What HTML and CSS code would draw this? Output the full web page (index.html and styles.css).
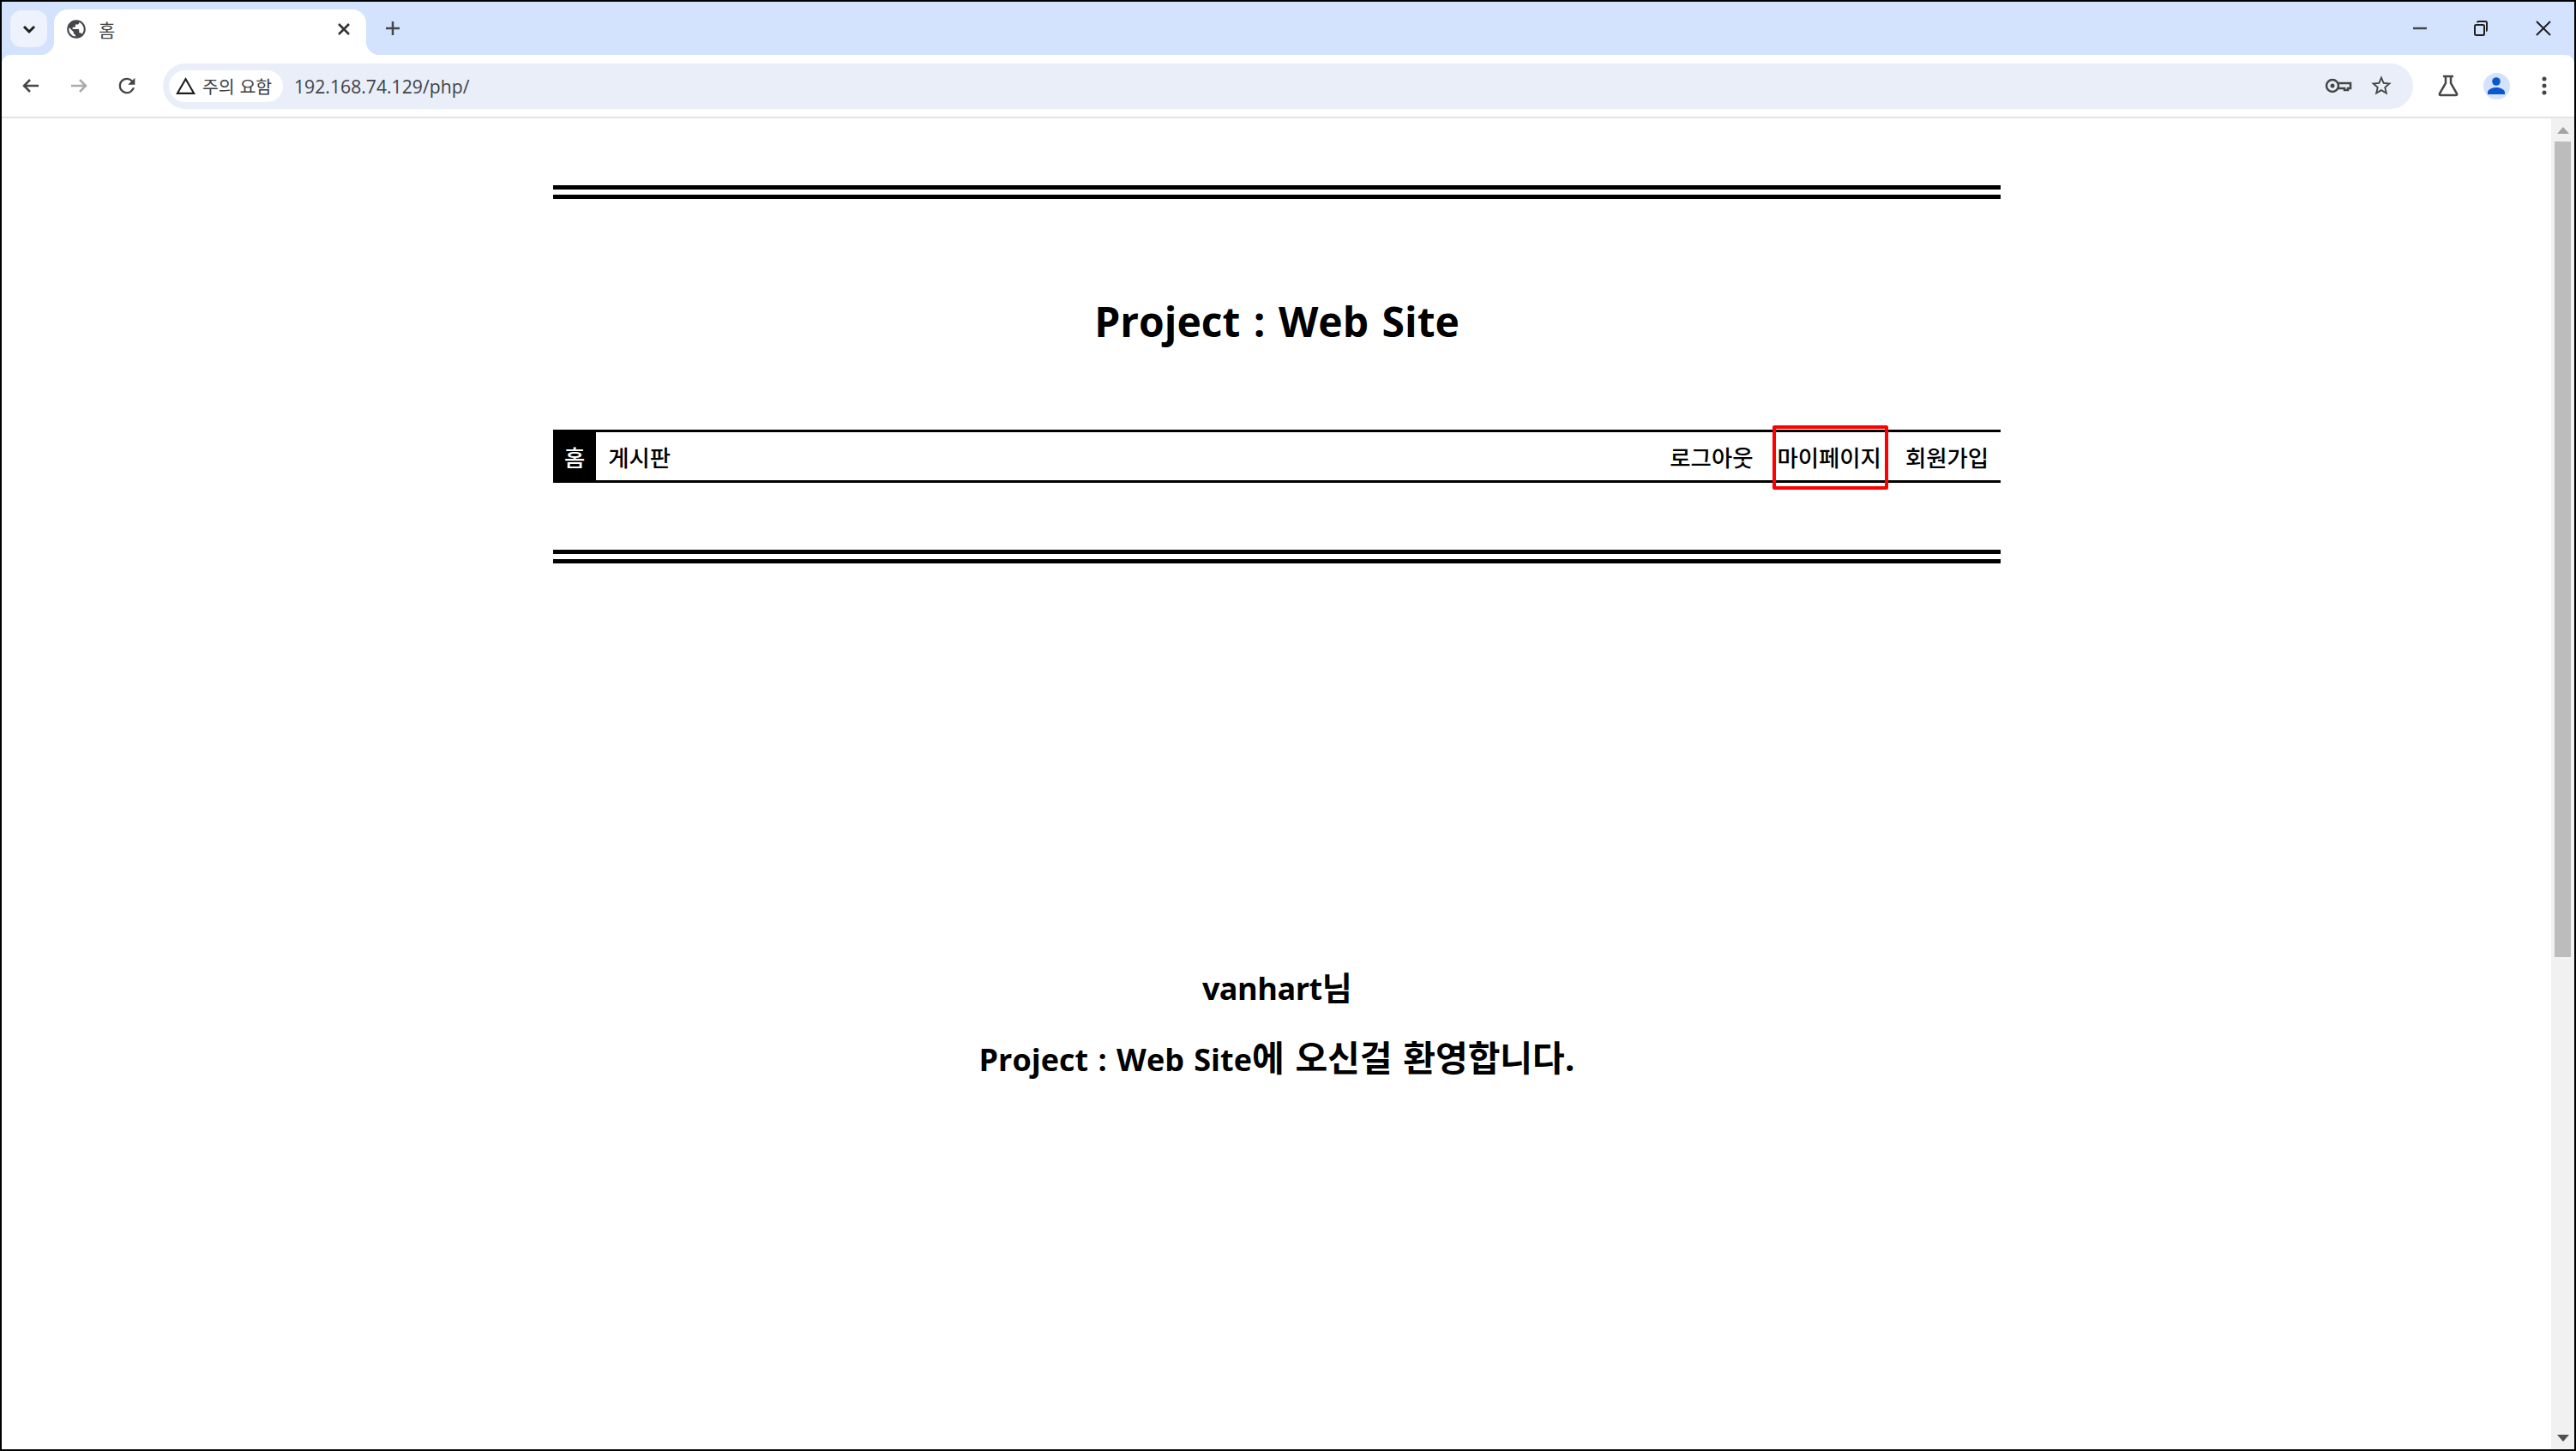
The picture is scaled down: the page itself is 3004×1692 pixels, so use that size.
FILE: index.html
```html
<!DOCTYPE html>
<html lang="ko">
	<head>
		<meta charset="utf-8">
		<title>홈</title>
		<link rel="stylesheet" href="styles.css">
	</head>
	<body>
		<header class="browser">
			<div class="tabstrip">
				<button class="tab-search">
					<svg width="20" height="20" viewBox="0 0 20 20"><path class="stroke-dark" d="M4 7l6 6 6-6"/></svg>
				</button>
				<div class="tab">
					<svg class="tab-globe" width="26" height="26" viewBox="0 0 24 24"><path d="M12 2C6.48 2 2 6.48 2 12s4.48 10 10 10 10-4.48 10-10S17.52 2 12 2zm-1 17.93c-3.95-.49-7-3.85-7-7.93 0-.62.08-1.21.21-1.79L9 15v1c0 1.1.9 2 2 2v1.93zm6.9-2.54c-.26-.81-1-1.39-1.9-1.39h-1v-3c0-.55-.45-1-1-1H8v-2h2c.55 0 1-.45 1-1V7h2c1.1 0 2-.9 2-2v-.41c2.93 1.19 5 4.06 5 7.41 0 2.08-.8 3.97-2.1 5.39z"/></svg>
					<span class="tab-title">홈</span>
					<svg class="tab-close" width="20" height="20" viewBox="0 0 20 20"><path class="stroke-close" d="M4 4l12 12M16 4L4 16"/></svg>
				</div>
				<button class="tab-new">
					<svg width="22" height="22" viewBox="0 0 22 22"><path class="stroke-mid" d="M11 3v16M3 11h16"/></svg>
				</button>
				<div class="spacer"></div>
				<button class="win-btn">
					<svg width="20" height="20" viewBox="0 0 20 20"><path class="stroke-mid" d="M2 10h16"/></svg>
				</button>
				<button class="win-btn">
					<svg width="20" height="20" viewBox="0 0 20 20"><path class="stroke-thin" d="M5 3.500c0-1 .6-1.500 1.500-1.500h8c1 0 1.500.6 1.500 1.500v8c0 1-.5 1.500-1 1.500M3.500 6h8c.8 0 1.500.7 1.500 1.500v9c0 .8-.7 1.500-1.500 1.500h-8C2.700 18 2 17.300 2 16.500v-9C2 6.700 2.700 6 3.500 6z"/></svg>
				</button>
				<button class="win-btn">
					<svg width="20" height="20" viewBox="0 0 20 20"><path class="stroke-thin" d="M2 2l16 16M18 2L2 18"/></svg>
				</button>
			</div>
			<div class="toolbar">
				<button class="tool-btn">
					<svg width="24" height="24" viewBox="0 0 24 24"><path class="stroke-mid" d="M21 12H4M11 5l-7 7 7 7"/></svg>
				</button>
				<button class="tool-btn">
					<svg width="24" height="24" viewBox="0 0 24 24"><path class="stroke-faded" d="M3 12h17M13 5l7 7-7 7"/></svg>
				</button>
				<button class="tool-btn">
					<svg width="28" height="28" viewBox="0 0 24 24"><path class="fill-mid" d="M17.650 6.350A7.958 7.958 0 0 0 12 4a8 8 0 1 0 7.730 10h-2.080A6 6 0 1 1 12 6c1.660 0 3.140.69 4.220 1.780L13 11h7V4l-2.350 2.350z"/></svg>
				</button>
				<div class="omnibox">
					<div class="chip">
						<svg width="25" height="25" viewBox="0 0 24 24"><path class="fill-dark" d="M1 21h22L12 2 1 21zm3.500-2L12 6l7.500 13h-15z"/></svg>
						<span>주의 요함</span>
					</div>
					<span class="url">192.168.74.129/php/</span>
					<div class="spacer"></div>
					<span class="omni-icon">
						<svg width="32" height="20" viewBox="0 0 32 20"><circle class="stroke-mid" cx="9" cy="10" r="7"/><circle class="fill-mid" cx="9" cy="10" r="2.500"/><path class="stroke-mid" d="M16 7h14v6h-3v2h-4v-2h-7"/></svg>
					</span>
					<span class="omni-icon">
						<svg width="28" height="28" viewBox="0 0 24 24"><path class="fill-mid" d="M22 9.240l-7.190-.62L12 2 9.190 8.630 2 9.240l5.460 4.730L5.820 21 12 17.270 18.180 21l-1.630-7.030L22 9.240zM12 15.400l-3.760 2.270 1-4.280-3.320-2.880 4.380-.38L12 6.100l1.710 4.040 4.380.38-3.320 2.880 1 4.280L12 15.400z"/></svg>
					</span>
				</div>
				<button class="tool-btn">
					<svg width="26" height="26" viewBox="0 0 26 26"><path class="stroke-mid" d="M7 2h12M10 2v8L3 22c-.5 1 0 2 1 2h18c1 0 1.500-1 1-2l-7-12V2"/></svg>
				</button>
				<button class="tool-btn">
					<span class="avatar">
						<svg width="22" height="22" viewBox="0 0 22 22"><circle class="fill-blue" cx="11" cy="6" r="4.800"/><path class="fill-blue" d="M1 21v-2.500c0-3 5-5.500 10-5.500s10 2.500 10 5.500V21z"/></svg>
					</span>
				</button>
				<button class="tool-btn">
					<svg width="6" height="24" viewBox="0 0 6 24"><circle class="fill-mid" cx="3" cy="4" r="2.500"/><circle class="fill-mid" cx="3" cy="12" r="2.500"/><circle class="fill-mid" cx="3" cy="20" r="2.500"/></svg>
				</button>
			</div>
		</header>

		<div class="viewport">
			<main class="page">
				<div class="masthead">
					<h1>Project : Web Site</h1>
					<nav class="menu">
						<a class="menu-item active">홈</a>
						<a class="menu-item">게시판</a>
						<span class="spacer"></span>
						<a class="menu-item">로그아웃</a>
						<a class="menu-item marked">마이페이지</a>
						<a class="menu-item">회원가입</a>
					</nav>
				</div>
				<section class="welcome">
					<h2 class="user">vanhart<span class="ko-short">님</span></h2>
					<h2>Project : Web Site<span class="ko">에 오신걸 환영합니다.</span></h2>
				</section>
			</main>
			<div class="scrollbar">
				<div class="scroll-btn">
					<svg width="14" height="8" viewBox="0 0 14 8"><path class="arrow-up" d="M7 0l7 8H0z"/></svg>
				</div>
				<div class="scroll-thumb"></div>
				<div class="spacer"></div>
				<div class="scroll-btn">
					<svg width="14" height="8" viewBox="0 0 14 8"><path class="arrow-down" d="M0 0h14L7 8z"/></svg>
				</div>
			</div>
		</div>
	</body>
</html>
```

FILE: styles.css
```css
html, body {
	margin: 0;
	padding: 0;
}

body {
	width: 3004px;
	height: 1692px;
	box-sizing: border-box;
	border: 2px solid #000;
	display: flex;
	flex-direction: column;
	overflow: hidden;
	background: #fff;
	font-family: "Open Sans", "Noto Sans CJK KR", sans-serif;
	color: #000;
}

button {
	border: 0;
	padding: 0;
	background: none;
	display: flex;
	align-items: center;
	justify-content: center;
}

.spacer {
	flex: 1;
}

/* browser chrome */
.browser {
	background: #d3e3fd;
	flex: none;
}

.tabstrip {
	height: 62px;
	display: flex;
	align-items: center;
	padding-left: 10px;
}

.tab-search {
	width: 43px;
	height: 43px;
	margin-right: 8px;
	background: #edf2fc;
	border-radius: 13px;
	align-self: flex-start;
	margin-top: 10px;
}

.tab {
	position: relative;
	width: 364px;
	height: 53px;
	align-self: flex-end;
	background: #fff;
	border-radius: 16px 16px 0 0;
	display: flex;
	align-items: center;
	padding: 0 16px 8px 13px;
	box-sizing: border-box;
}

/* flares at the bottom corners of the active tab */
.tab::before,
.tab::after {
	content: "";
	position: absolute;
	bottom: 0;
	width: 16px;
	height: 16px;
}

.tab::before {
	left: -16px;
	background: radial-gradient(circle at 0 0, transparent 16px, #fff 16.500px);
}

.tab::after {
	right: -16px;
	background: radial-gradient(circle at 100% 0, transparent 16px, #fff 16.500px);
}

.tab-globe path {
	fill: #45474a;
}

.tab-title {
	margin-left: 13px;
	flex: 1;
	font-family: "Noto Sans CJK KR", sans-serif;
	font-size: 21px;
	color: #3c4043;
}

.tab-new {
	width: 44px;
	height: 44px;
	margin-left: 9px;
}

.win-btn {
	width: 72px;
	height: 60px;
}

.toolbar {
	height: 72px;
	display: flex;
	align-items: center;
	padding: 0 7px 0 6px;
	background: #fff;
	border-bottom: 2px solid #e3e3e3;
	border-radius: 10px 10px 0 0;
}

.tool-btn {
	width: 56px;
	height: 56px;
	flex: none;
}

.omnibox {
	flex: 1;
	height: 53px;
	margin: 0 13px 0 14px;
	padding: 0 12px 0 7px;
	background: #e9eef8;
	border-radius: 27px;
	display: flex;
	align-items: center;
}

.chip {
	height: 37px;
	width: 133px;
	box-sizing: border-box;
	padding-left: 7px;
	background: #fff;
	border-radius: 19px;
	display: flex;
	align-items: center;
	gap: 7px;
	font-family: "Noto Sans CJK KR", sans-serif;
	font-size: 20.500px;
	color: #3c4043;
}

.url {
	margin-left: 13px;
	font-family: "Open Sans", sans-serif;
	font-size: 21.200px;
	color: #3f4349;
}

.omni-icon {
	width: 50px;
	display: flex;
	justify-content: center;
}

.avatar {
	width: 31px;
	height: 31px;
	border-radius: 50%;
	background: #d3e3fd;
	display: flex;
	align-items: center;
	justify-content: center;
}

.stroke-dark,
.stroke-close,
.stroke-mid,
.stroke-thin,
.stroke-faded {
	fill: none;
	stroke-width: 2.500;
}

.stroke-dark {
	stroke: #1f1f1f;
	stroke-width: 3;
}

.stroke-close {
	stroke: #2f3134;
}

.stroke-mid {
	stroke: #444746;
}

.stroke-thin {
	stroke: #1f1f1f;
	stroke-width: 2;
}

.stroke-faded {
	stroke: #a9abad;
}

.fill-dark {
	fill: #1f1f1f;
}

.fill-mid {
	fill: #444746;
}

.fill-blue {
	fill: #0b57d0;
}

/* page */
.viewport {
	flex: 1;
	display: flex;
	min-height: 0;
}

.page {
	flex: 1;
	padding-top: 78px;
}

.masthead {
	width: 1688px;
	margin-left: 643px;
	box-sizing: border-box;
	border-top: 16px double #000;
	border-bottom: 16px double #000;
	padding-bottom: 78px;
}

h1 {
	margin: 0;
	padding: 109px 0 93px;
	font-size: 48px;
	line-height: 67px;
	font-weight: 700;
	word-spacing: 3px;
	text-align: center;
}

.menu {
	height: 62px;
	box-sizing: border-box;
	border-top: 3px solid #000;
	border-bottom: 3px solid #000;
	display: flex;
	font-family: "Noto Sans CJK KR", sans-serif;
	font-size: 26.400px;
	font-weight: 500;
}

.menu-item {
	position: relative;
	padding: 0 14px;
	display: flex;
	align-items: center;
}

.menu-item.active {
	margin: -3px 0;
	padding: 0 13px;
	background: #000;
	color: #fff;
}

/* annotation drawn over the screenshot */
.marked::after {
	content: "";
	position: absolute;
	top: -8px;
	right: 6px;
	bottom: -11px;
	left: 9px;
	border: 4px solid #f00;
	border-radius: 2px;
}

.welcome {
	width: 1688px;
	margin: 453px 0 0 643px;
	text-align: center;
}

h2 {
	margin: 0;
	font-size: 36px;
	line-height: 83px;
	font-weight: 700;
	word-spacing: 2px;
}

.user {
	letter-spacing: -.5px;
}

.ko-short {
	font-size: 38px;
}

.ko {
	font-size: 41px;
	line-height: 1;
}

/* scrollbar */
.scrollbar {
	width: 27px;
	flex: none;
	background: #f1f1f1;
	display: flex;
	flex-direction: column;
}

.scroll-btn {
	height: 27px;
	flex: none;
	display: flex;
	align-items: center;
	justify-content: center;
}

.scroll-thumb {
	height: 951px;
	margin: 0 4px;
	background: #bcbcbc;
}

.arrow-up {
	fill: #a3a3a3;
}

.arrow-down {
	fill: #505050;
}
```
